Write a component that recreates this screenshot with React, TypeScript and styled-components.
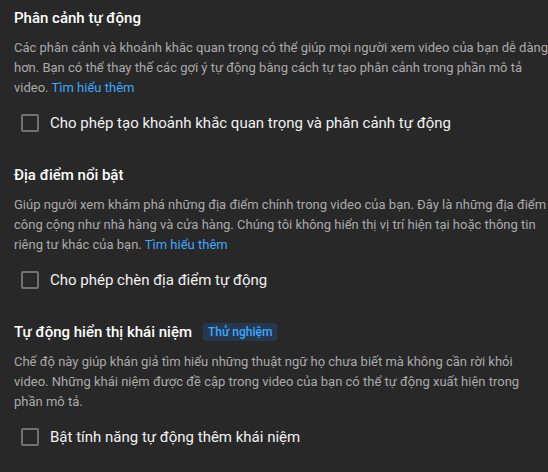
import React from 'react';
import styled, { createGlobalStyle } from 'styled-components';

const GlobalStyle = createGlobalStyle`
  html, body {
    margin: 0;
    padding: 0;
    background: #282828;
  }
  body {
    font-family: Roboto, 'Noto Sans', Arial, sans-serif;
    -webkit-font-smoothing: antialiased;
  }
`;

type SectionData = {
  title: string;
  badge?: string;
  desc: string;
  link?: string;
  option: string;
};

const sections: SectionData[] = [
  {
    title: 'Phân cảnh tự động',
    desc: 'Các phân cảnh và khoảnh khắc quan trọng có thể giúp mọi người xem video của bạn dễ dàng hơn. Bạn có thể thay thế các gợi ý tự động bằng cách tự tạo phân cảnh trong phần mô tả video.',
    link: 'Tìm hiểu thêm',
    option: 'Cho phép tạo khoảnh khắc quan trọng và phân cảnh tự động',
  },
  {
    title: 'Địa điểm nổi bật',
    desc: 'Giúp người xem khám phá những địa điểm chính trong video của bạn. Đây là những địa điểm công cộng như nhà hàng và cửa hàng. Chúng tôi không hiển thị vị trí hiện tại hoặc thông tin riêng tư khác của bạn.',
    link: 'Tìm hiểu thêm',
    option: 'Cho phép chèn địa điểm tự động',
  },
  {
    title: 'Tự động hiển thị khái niệm',
    badge: 'Thử nghiệm',
    desc: 'Chế độ này giúp khán giả tìm hiểu những thuật ngữ họ chưa biết mà không cần rời khỏi video. Những khái niệm được đề cập trong video của bạn có thể tự động xuất hiện trong phần mô tả.',
    option: 'Bật tính năng tự động thêm khái niệm',
  },
];

const App = () => {
  return (
    <>
      <GlobalStyle />
      <Main>
        {sections.map((s) => (
          <Section key={s.title}>
            <Header>
              <Title>{s.title}</Title>
              {s.badge && <Badge>{s.badge}</Badge>}
            </Header>
            <Desc>
              {s.desc}
              {s.link && (
                <>
                  {' '}
                  <Link href="#">{s.link}</Link>
                </>
              )}
            </Desc>
            <Option>
              <Box type="checkbox" />
              <span>{s.option}</span>
            </Option>
          </Section>
        ))}
      </Main>
    </>
  );
};

const Main = styled.div`
  width: 548px;
  height: 472px;
  box-sizing: border-box;
  padding: 6px 0 0 14px;
  background: #282828;
  display: flex;
  flex-direction: column;
  gap: 28px;
  overflow: hidden;
`;

const Section = styled.section`
  display: flex;
  flex-direction: column;
`;

const Header = styled.div`
  display: flex;
  align-items: center;
  height: 24px;
`;

const Title = styled.h3`
  margin: 0;
  color: #fff;
  font-size: 15px;
  font-weight: 500;
  line-height: 24px;
`;

const Badge = styled.span`
  margin-left: 11px;
  height: 18px;
  padding: 0 5px;
  display: inline-flex;
  align-items: center;
  border-radius: 3px;
  background: #263850;
  color: #3ea6ff;
  font-size: 12px;
  font-weight: 500;
`;

const Desc = styled.p`
  margin: 8px 0 0;
  color: #aaaaaa;
  font-size: 13px;
  line-height: 20px;
`;

const Link = styled.a`
  color: #3ea6ff;
  text-decoration: none;
`;

const Option = styled.label`
  margin-top: 13px;
  height: 24px;
  display: flex;
  align-items: center;
  padding-left: 7px;
  color: #f1f1f1;
  font-size: 15px;
  cursor: pointer;

  span {
    margin-left: 11px;
  }
`;

const Box = styled.input`
  appearance: none;
  margin: 0;
  width: 18px;
  height: 18px;
  box-sizing: border-box;
  border: 2px solid #717171;
  border-radius: 2px;
  background: transparent;
  cursor: pointer;
`;

export default App;
